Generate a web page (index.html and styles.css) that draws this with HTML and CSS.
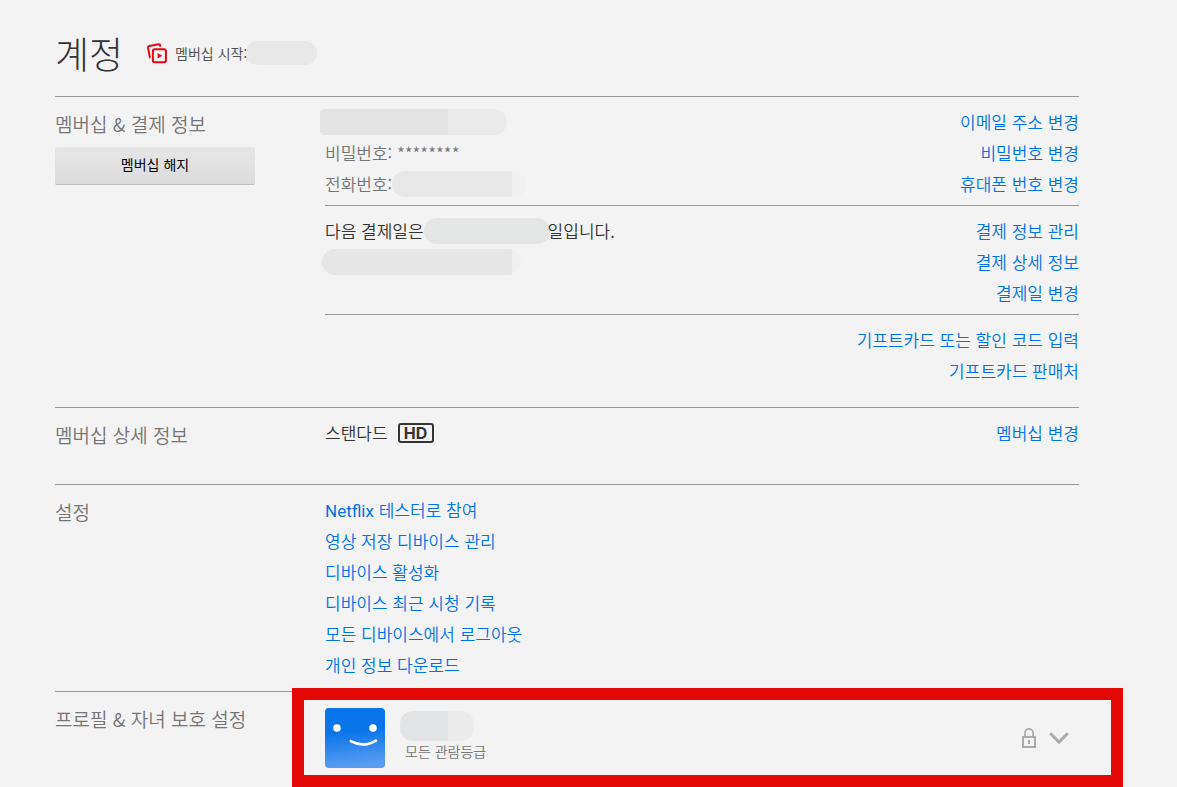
FILE: index.html
```html
<!DOCTYPE html>
<html lang="ko">
<head>
    <meta charset="UTF-8">
    <meta name="viewport" content="width=device-width, initial-scale=1.0">
    <title>계정</title>
    <link rel="stylesheet" href="styles.css">
</head>
<body>
    <main class="account">
        <header class="account-header">
            <h1>계정</h1>
            <div class="member-since">
                <svg class="since-icon" width="22" height="22" viewBox="0 -1 22 22" fill="none" aria-hidden="true">
                    <path d="M4.5 14.6 3.9 14.5 2 4.9Q1.8 3.4 3.2 3.1L12.6 1.3Q13.9 1.1 14.2 2.3L14.5 3.7" stroke="#e50914" stroke-width="2"/>
                    <rect x="6.9" y="6.3" width="13" height="13" rx="1.8" stroke="#e50914" stroke-width="2"/>
                    <path d="M11.6 10.1 16.2 12.8 11.6 15.5Z" fill="#e50914"/>
                </svg>
                <span>멤버십 시작:</span>
                <span class="redacted redacted-date"></span>
            </div>
        </header>

        <section class="section section-billing">
            <div class="section-title">
                <h2>멤버십 &amp; 결제 정보</h2>
                <button type="button" class="btn-cancel">멤버십 해지</button>
            </div>
            <div class="section-body">
                <div class="group">
                    <div class="info muted">
                        <p><span class="redacted redacted-email"></span></p>
                        <p>비밀번호: ********</p>
                        <p>전화번호:<span class="redacted redacted-phone"></span></p>
                    </div>
                    <ul class="links">
                        <li><a href="#">이메일 주소 변경</a></li>
                        <li><a href="#">비밀번호 변경</a></li>
                        <li><a href="#">휴대폰 번호 변경</a></li>
                    </ul>
                </div>
                <div class="group">
                    <div class="info">
                        <p>다음 결제일은<span class="redacted redacted-billing"></span>일입니다.</p>
                        <p><span class="redacted redacted-card"></span></p>
                    </div>
                    <ul class="links">
                        <li><a href="#">결제 정보 관리</a></li>
                        <li><a href="#">결제 상세 정보</a></li>
                        <li><a href="#">결제일 변경</a></li>
                    </ul>
                </div>
                <div class="group group-end">
                    <ul class="links">
                        <li><a href="#">기프트카드 또는 할인 코드 입력</a></li>
                        <li><a href="#">기프트카드 판매처</a></li>
                    </ul>
                </div>
            </div>
        </section>

        <section class="section section-plan">
            <div class="section-title">
                <h2>멤버십 상세 정보</h2>
            </div>
            <div class="section-body">
                <div class="group">
                    <div class="info">
                        <p class="plan">스탠다드 <span class="hd-badge">HD</span></p>
                    </div>
                    <ul class="links">
                        <li><a href="#">멤버십 변경</a></li>
                    </ul>
                </div>
            </div>
        </section>

        <section class="section section-settings">
            <div class="section-title">
                <h2>설정</h2>
            </div>
            <div class="section-body">
                <div class="group">
                    <ul class="links links-left">
                        <li><a href="#"><span class="latin">Netflix</span> 테스터로 참여</a></li>
                        <li><a href="#">영상 저장 디바이스 관리</a></li>
                        <li><a href="#">디바이스 활성화</a></li>
                        <li><a href="#">디바이스 최근 시청 기록</a></li>
                        <li><a href="#">모든 디바이스에서 로그아웃</a></li>
                        <li><a href="#">개인 정보 다운로드</a></li>
                    </ul>
                </div>
            </div>
        </section>

        <section class="section section-profiles">
            <div class="section-title">
                <h2>프로필 &amp; 자녀 보호 설정</h2>
            </div>
            <div class="section-body">
                <div class="profile">
                    <svg class="avatar" width="60" height="60" viewBox="0 0 60 60" aria-hidden="true">
                        <defs>
                            <linearGradient id="avatar-bg" x1="0" y1="0" x2="0.1" y2="1">
                                <stop offset="0" stop-color="#0a74ea"/>
                                <stop offset="0.42" stop-color="#0a74ea"/>
                                <stop offset="1" stop-color="#589df0"/>
                            </linearGradient>
                        </defs>
                        <rect width="60" height="60" rx="4" fill="url(#avatar-bg)"/>
                        <circle cx="12" cy="20" r="3.8" fill="#fff"/>
                        <circle cx="48" cy="20" r="3.8" fill="#fff"/>
                        <path d="M25.8 33.2Q38.5 40.2 51 32.6" fill="none" stroke="#fff" stroke-width="2.6" stroke-linecap="round"/>
                    </svg>
                    <div class="profile-text">
                        <span class="redacted redacted-name"></span>
                        <p>모든 관람등급</p>
                    </div>
                    <button type="button" class="profile-toggle" aria-label="프로필 열기">
                        <svg width="14" height="20" viewBox="0 0 14 20" fill="none" stroke="#aaa" aria-hidden="true">
                            <rect x="1" y="9" width="12" height="10" stroke-width="2"/>
                            <path d="M3 9V4.8a4 4 0 0 1 8 0V9" stroke-width="1.7"/>
                            <path d="M7 12v4" stroke-width="2"/>
                        </svg>
                        <svg width="20" height="14" viewBox="0 0 20 14" fill="none" stroke="#aaa" stroke-width="3" aria-hidden="true">
                            <path d="M1.2 2.2 10 11.1 18.8 2.2"/>
                        </svg>
                    </button>
                </div>
                <div class="highlight"></div>
            </div>
        </section>
    </main>
</body>
</html>
```

FILE: styles.css
```css
* {
    box-sizing: border-box;
}
body {
    margin: 0;
    background: #f3f3f3;
    color: #333;
    font-family: "Noto Sans CJK KR", sans-serif;
    font-size: 17px;
    font-weight: 350;
    line-height: 31px;
}
h1, h2, p, ul {
    margin: 0;
    padding: 0;
    font-weight: inherit;
}
ul {
    list-style: none;
}
a {
    color: #0073e6;
    text-decoration: none;
}
a:hover {
    text-decoration: underline;
}
.account {
    padding: 0 98px 0 55px;
}

/* header */
.account-header {
    display: flex;
    align-items: center;
    gap: 23px;
    padding: 28px 0 18px;
}
.account-header h1 {
    font-size: 37px;
    font-weight: 300;
    line-height: 50px;
}
.member-since {
    display: flex;
    align-items: center;
    font-size: 14px;
    font-weight: 400;
    color: #555;
}
.since-icon {
    margin-right: 7px;
}

/* sections */
.section {
    display: flex;
    border-top: 1px solid #999;
}
.section-title {
    flex: 0 0 270px;
    padding-top: 11px;
}
.section-title h2 {
    font-size: 19px;
    color: #757575;
}
.section-body {
    flex: 1;
    position: relative;
}
.section-billing {
    padding-bottom: 15px;
}
.section-plan {
    padding-bottom: 30px;
}
.section-settings {
    padding-bottom: 5px;
}
.group {
    display: flex;
    justify-content: space-between;
    padding: 9px 0 6px;
}
.group + .group {
    border-top: 1px solid #999;
}
.group-end {
    justify-content: flex-end;
}
.info p {
    display: flex;
    align-items: center;
    height: 31px;
}
.muted {
    color: #757575;
}
.links {
    text-align: right;
}
.links-left {
    text-align: left;
}
.latin {
    font-family: Roboto, sans-serif;
    font-weight: 400;
    line-height: 1;
}
.btn-cancel {
    display: block;
    width: 200px;
    height: 38px;
    margin-top: 8px;
    padding: 0 0 4px;
    border: 0;
    border-bottom: 1px solid #bfbfbf;
    border-radius: 2px;
    background: linear-gradient(#e6e6e6, #dcdcdc);
    color: #000;
    font-family: inherit;
    font-size: 14px;
}
.hd-badge {
    width: 36px;
    height: 20px;
    margin-left: 10px;
    border: 2px solid #333;
    border-radius: 3px;
    font-family: Inter, sans-serif;
    font-size: 16px;
    font-weight: 700;
    line-height: 16px;
    text-align: center;
}

/* blanked-out personal data */
.redacted {
    display: block;
    height: 26px;
    border-radius: 13px;
    background: #e6e7e7;
}
.redacted-date {
    width: 71px;
    height: 24px;
    margin-left: -1px;
    background: #e8e8e8;
}
.redacted-email {
    width: 187px;
    margin-left: -5px;
    border-radius: 4px 13px 13px 4px;
    background: linear-gradient(90deg, #e3e3e3 128px, #eaeaea 128px);
}
.redacted-phone {
    width: 134px;
    background: linear-gradient(90deg, #e8e8e8 120px, #f0f0f0 120px);
}
.redacted-billing {
    width: 126px;
    margin-right: -2px;
    background: #e4e5e5;
}
.redacted-card {
    width: 199px;
    margin-left: -3px;
    background: linear-gradient(90deg, #e6e6e6 190px, #f0f0f0 190px);
}
.redacted-name {
    width: 74px;
    height: 30px;
    margin-left: -5px;
    background: linear-gradient(90deg, #e2e3e4 48px, #ececec 48px);
}

/* profile row */
.profile {
    display: flex;
    align-items: center;
    padding: 16px 10px 19px 0;
}
.avatar {
    margin-right: 20px;
}
.profile-text {
    padding-bottom: 4px;
    font-size: 14px;
    line-height: 20px;
    color: #757575;
}
.profile-toggle {
    display: flex;
    align-items: center;
    gap: 13px;
    margin-left: auto;
    padding: 0;
    border: 0;
    background: none;
    cursor: pointer;
}
.highlight {
    position: absolute;
    top: -4px;
    right: -44px;
    bottom: 0;
    left: -33px;
    border: 12px solid #e10806;
    pointer-events: none;
}
```
